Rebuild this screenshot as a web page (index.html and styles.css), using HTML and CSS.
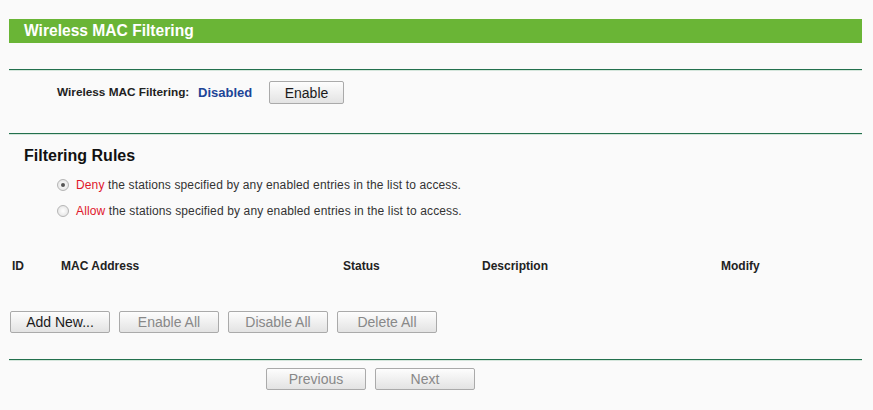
FILE: index.html
```html
<!DOCTYPE html>
<html lang="en">
<head>
    <meta charset="UTF-8">
    <title>Wireless MAC Filtering</title>
    <link rel="stylesheet" href="styles.css">
</head>
<body>
    <div class="page">
        <div class="title-bar">Wireless MAC Filtering</div>
        <div class="divider"></div>

        <div class="status-row">
            <span class="status-label">Wireless MAC Filtering:</span>
            <span class="status-value">Disabled</span>
            <button type="button" class="btn btn-enable">Enable</button>
        </div>
        <div class="divider"></div>

        <h2 class="section-title">Filtering Rules</h2>
        <div class="rules">
            <label class="rule">
                <input type="radio" name="rule" class="radio" checked>
                <span><em class="rule-key">Deny</em> the stations specified by any enabled entries in the list to access.</span>
            </label>
            <label class="rule">
                <input type="radio" name="rule" class="radio">
                <span><em class="rule-key">Allow</em> the stations specified by any enabled entries in the list to access.</span>
            </label>
        </div>

        <div class="list-head">
            <span>ID</span>
            <span>MAC Address</span>
            <span>Status</span>
            <span>Description</span>
            <span>Modify</span>
        </div>

        <div class="list-actions">
            <button type="button" class="btn">Add New...</button>
            <button type="button" class="btn" disabled>Enable All</button>
            <button type="button" class="btn" disabled>Disable All</button>
            <button type="button" class="btn" disabled>Delete All</button>
        </div>
        <div class="divider"></div>

        <div class="pager">
            <button type="button" class="btn" disabled>Previous</button>
            <button type="button" class="btn" disabled>Next</button>
        </div>
    </div>
</body>
</html>
```

FILE: styles.css
```css
* {
    margin: 0;
    padding: 0;
    box-sizing: border-box;
}

body {
    font-family: Arial, "Liberation Sans", sans-serif;
    background-color: #fafafa;
    color: #222;
    font-size: 12px;
}

.page {
    width: 853px;
    margin-left: 9px;
}

.title-bar {
    margin-top: 19px;
    height: 24px;
    line-height: 24px;
    padding-left: 15px;
    background-color: #6ab536;
    color: white;
    font-size: 15.6px;
    font-weight: bold;
}

.divider {
    height: 2px;
    border-top: 1px solid #23704d;
    border-bottom: 1px solid #d5e6dc;
}

.title-bar + .divider {
    margin-top: 26px;
}

.status-row {
    height: 62px;
    padding-top: 10px;
    padding-left: 48px;
    display: flex;
    align-items: flex-start;
}

.status-label {
    font-weight: bold;
    font-size: 11.8px;
    line-height: 23px;
    width: 141px;
}

.status-value {
    font-weight: bold;
    font-size: 13px;
    line-height: 23px;
    color: #1d4597;
    width: 71px;
}

.btn {
    width: 100px;
    height: 22px;
    border: 1px solid #aaa;
    border-radius: 2px;
    background: linear-gradient(#fdfdfd, #e3e3e3);
    font-family: inherit;
    font-size: 14px;
    color: #1a1a1a;
}

.btn:disabled {
    color: #888;
}

.btn-enable {
    width: 75px;
    height: 23px;
}

.section-title {
    margin-top: 11px;
    padding-left: 15px;
    font-size: 16px;
    line-height: 20px;
    color: #111;
}

.rules {
    margin-top: 6px;
    padding-left: 48px;
}

.rule {
    display: flex;
    align-items: center;
    gap: 7px;
    height: 26px;
    color: #333;
    letter-spacing: 0.13px;
}

.rule-key {
    font-style: normal;
    color: #e0162b;
}

.radio {
    appearance: none;
    width: 12px;
    height: 12px;
    border-radius: 50%;
    border: 1px solid #b5b5b5;
    background: radial-gradient(#ffffff, #dedede);
    display: grid;
    place-items: center;
}

.radio:checked::after {
    content: "";
    width: 4px;
    height: 4px;
    border-radius: 50%;
    background-color: #555;
}

.list-head {
    margin-top: 32px;
    padding-left: 3px;
    display: grid;
    grid-template-columns: 49px 282px 139px 239px 1fr;
    line-height: 20px;
    font-weight: bold;
}

.list-actions {
    margin-top: 35px;
    padding-left: 1px;
    display: flex;
    gap: 9px;
}

.list-actions + .divider {
    margin-top: 26px;
}

.pager {
    margin-top: 7px;
    padding-left: 257px;
    display: flex;
    gap: 9px;
}
```
